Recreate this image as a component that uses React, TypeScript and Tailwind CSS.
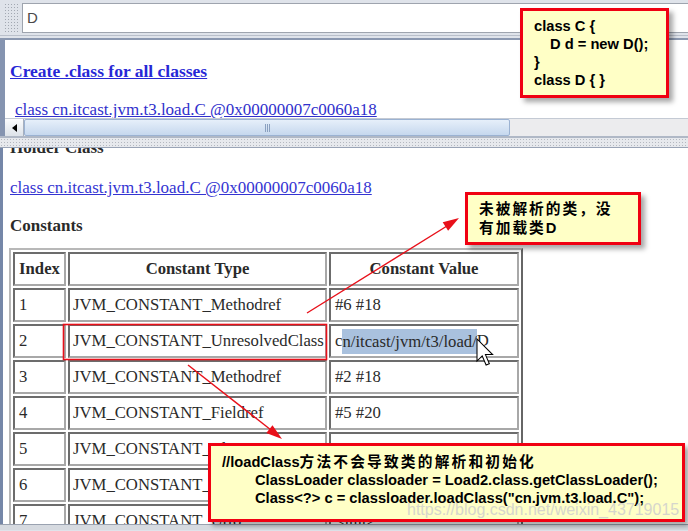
import React from "react";

const ROWS: [string, string, React.ReactNode][] = [
  ["1", "JVM_CONSTANT_Methodref", "#6 #18"],
  [
    "2",
    "JVM_CONSTANT_UnresolvedClass",
    <>
      c
      <span className="inline-block bg-[#a9c1de] leading-[25px]">n/itcast/jvm/t3/load/</span>D
    </>,
  ],
  ["3", "JVM_CONSTANT_Methodref", "#2 #18"],
  ["4", "JVM_CONSTANT_Fieldref", "#5 #20"],
  ["5", "JVM_CONSTANT_Class", "#21"],
  ["6", "JVM_CONSTANT_Class", "#22"],
  ["7", "JVM_CONSTANT_Utf8", "<init>"],
];

const cell =
  "h-[34px] flex items-center border-2 border-t-[#6c6c6c] border-l-[#6c6c6c] border-r-[#a8a8a8] border-b-[#a8a8a8]";

const sans = "font-['Liberation_Sans','Noto_Sans_CJK_SC',sans-serif]";

const Callout = ({ className, children }: { className: string; children: React.ReactNode }) => (
  <div
    className={`absolute bg-[#ffffc6] border-[3px] border-[#f00012] shadow-[4px_4px_5px_rgba(0,0,0,0.35)] ${sans} font-bold text-[14.7px] text-black ${className}`}
  >
    {children}
  </div>
);

export default function App() {
  return (
    <div className="relative w-[688px] h-[531px] overflow-hidden bg-[#dfe3ea] font-['Liberation_Serif',serif]">
      {/* search bar */}
      <div className="flex h-[35px] pt-[3px] pb-[2px]">
        <div className="ml-[4px] mr-[2px] w-[16px] bg-[radial-gradient(circle,#a2a8b2_0.9px,transparent_1px)] bg-[length:3px_3px]" />
        <div className={`flex-1 flex items-center pl-[4px] bg-white border border-r-0 border-[#9ea4ae] text-[15px] text-[#4a4a4a] ${sans}`}>
          D
        </div>
      </div>
      <div className="h-[5px] border-t border-[#b9bfca] border-b-2 border-b-[#8b98b0]" />

      {/* top panel */}
      <div className="flex flex-col border-l-[5px] border-[#8594b0]">
        <div className="h-[78px] bg-white overflow-hidden pl-[5px] pt-[21px]">
          <div className="text-[17.5px] leading-[20px] font-bold text-[#2727d6] underline">
            Create .class for all classes
          </div>
          <div className="mt-[19px] pl-[5px] text-[17px] leading-[20px] text-[#3030cc] underline whitespace-nowrap">
            class cn.itcast.jvm.t3.load.C @0x00000007c0060a18
          </div>
        </div>
        {/* horizontal scrollbar */}
        <div className="flex h-[18px] bg-[#ececee] border-t border-[#c4cad4]">
          <div className="w-[19px] flex items-center justify-center bg-gradient-to-b from-[#fbfcfd] to-[#dde2e9] border-r border-[#a7b0be]">
            <div className="w-0 h-0 border-y-[4px] border-y-transparent border-r-[5px] border-r-black" />
          </div>
          <div className="w-[486px] flex items-center justify-center gap-[1px] rounded-[2px] bg-gradient-to-b from-[#e6effa] to-[#c6d8ee] border border-[#9bb2d2]">
            <div className="w-[1px] h-[8px] bg-[#8aa0c0]" />
            <div className="w-[1px] h-[8px] bg-[#8aa0c0]" />
            <div className="w-[1px] h-[8px] bg-[#8aa0c0]" />
          </div>
        </div>
      </div>
      <div className="h-[2px] bg-[#b0b8c6]" />
      {/* split divider */}
      <div className="h-[10px] bg-[#e7e9ed] bg-[radial-gradient(circle,#b4b8c0_0.8px,transparent_1px)] bg-[length:3px_3px] border-b border-[#9aa4b6]" />

      {/* lower panel, scrolled a little */}
      <div className="h-[376px] bg-white overflow-hidden border-l-[3px] border-[#7587a8] pl-[7px] text-[#2a2a2a]">
        <div className="-mt-[10px] text-[17px] leading-[20px] font-bold">Holder Class</div>
        <div className="mt-[20px] text-[17px] leading-[20px] text-[#3434d2] underline whitespace-nowrap">
          class cn.itcast.jvm.t3.load.C @0x00000007c0060a18
        </div>
        <div className="mt-[18px] text-[17px] leading-[20px] font-bold">Constants</div>
        <div className="mt-[12px] -ml-[1px] w-[514px] p-[2px] border-2 border-t-[#b8b8b8] border-l-[#b8b8b8] border-r-[#666] border-b-[#666]">
          <div className="grid grid-cols-[53px_259px_190px] gap-x-[2px] gap-y-[2px] text-[16.7px]">
            <div className={`${cell} justify-center font-bold`}>Index</div>
            <div className={`${cell} justify-center font-bold`}>Constant Type</div>
            <div className={`${cell} justify-center font-bold`}>Constant Value</div>
            {ROWS.map(([i, t, v]) => (
              <React.Fragment key={i}>
                <div className={`${cell} pl-[4px]`}>{i}</div>
                <div className={`${cell} pl-[3px] whitespace-nowrap`}>{t}</div>
                <div className={`${cell} pl-[4px] whitespace-nowrap`}>{v}</div>
              </React.Fragment>
            ))}
          </div>
        </div>
      </div>
      <div className="h-[6px] bg-[#d6dae0] border-t border-[#9aa2b0]" />

      {/* annotations */}
      <svg className="absolute inset-0 pointer-events-none" width="688" height="531">
        <rect x="63.5" y="324.5" width="263" height="35" fill="none" stroke="#e8101a" strokeWidth="1.6" />
        <line x1="307" y1="313" x2="447" y2="226" stroke="#e8101a" strokeWidth="1.4" />
        <polygon points="459,218 448.1,230.7 442.7,222.3" fill="#e8101a" />
        <line x1="188" y1="365" x2="271" y2="430" stroke="#e8101a" strokeWidth="1.4" />
        <polygon points="282,439 266.3,433 272.5,425.2" fill="#e8101a" />
        <g transform="translate(477 339) scale(1.3)">
          <path d="M0 0 L0 17 L4 13 L7 20 L9.5 19 L6.5 12 L12 12 Z" fill="white" stroke="black" strokeWidth="0.8" />
        </g>
      </svg>

      <Callout className="left-[520px] top-[8px] w-[149px] h-[90px] pl-[11px] pt-[6px] leading-[18px]">
        <div>class C {"{"}</div>
        <div className="pl-[16px]">D d = new D();</div>
        <div>{"}"}</div>
        <div>class D {"{ }"}</div>
      </Callout>

      <Callout className="left-[465px] top-[192px] w-[176px] h-[53px] pl-[11px] pt-[5px] leading-[19px] tracking-[2px]">
        <div>未被解析的类，没</div>
        <div>有加载类D</div>
      </Callout>

      <Callout className="left-[208px] top-[443px] w-[477px] h-[79px] pl-[11px] pt-[7px] leading-[18px]">
        <div className="whitespace-nowrap">
          //loadClass<span className="tracking-[2.2px]">方法不会导致类的解析和初始化</span>
        </div>
        <div className="pl-[33px] whitespace-nowrap">ClassLoader classloader = Load2.class.getClassLoader();</div>
        <div className="pl-[33px] whitespace-nowrap">Class&lt;?&gt; c = classloader.loadClass("cn.jvm.t3.load.C");</div>
      </Callout>

      <div className="absolute left-[407px] top-[500px] font-['Liberation_Sans',sans-serif] text-[16px] leading-[20px] text-[#d6d6cc] whitespace-nowrap">
        https://blog.csdn.net/weixin_43719015
      </div>
    </div>
  );
}
